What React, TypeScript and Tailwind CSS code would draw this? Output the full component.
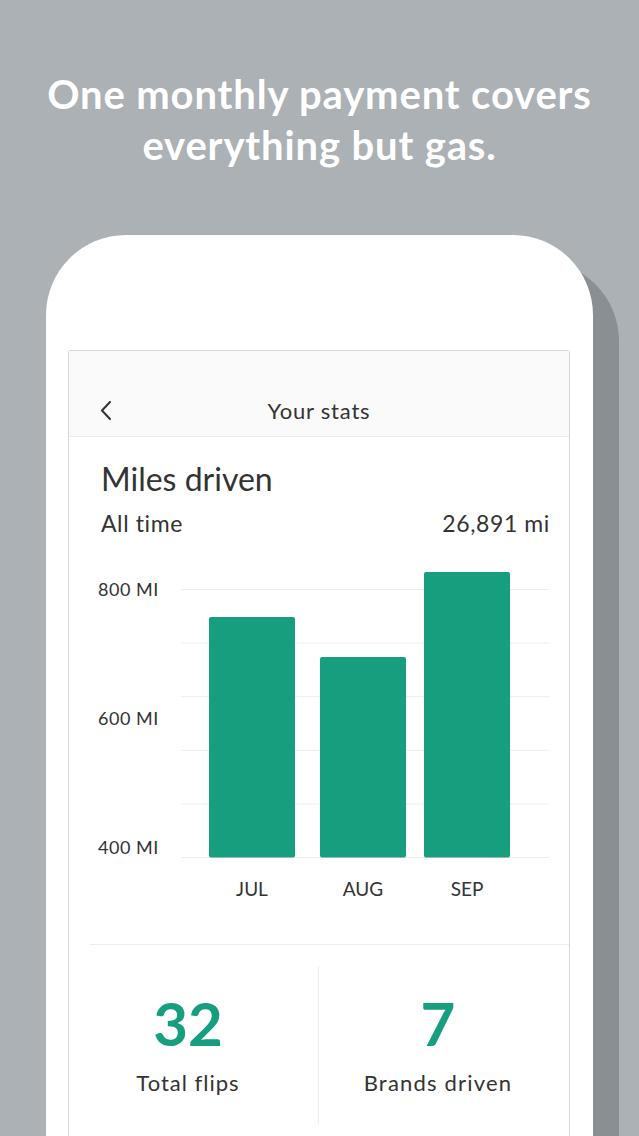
import React from 'react';

const GREEN = '#169e7f';

const bars = [
  { label: 'JUL', x: 28, top: 52, ml: 'ml-[28px]' },
  { label: 'AUG', x: 139, top: 92, ml: 'ml-[25px]' },
  { label: 'SEP', x: 243, top: 7, ml: 'ml-[18px]' },
];

const gridY = [24, 77.6, 131.2, 184.8, 238.4, 292];

function BackChevron() {
  return (
    <svg width="12" height="19" viewBox="0 0 12 19" fill="none">
      <polyline points="10,1 2,9.5 10,18" stroke="#333" strokeWidth="2" strokeLinecap="round" strokeLinejoin="round" />
    </svg>
  );
}

function MilesChart() {
  return (
    <div className="-ml-[3px] mt-[28px] flex h-[293px]">
      <div className="w-[83px] pt-[13px]">
        <div className="flex h-[280px] flex-col justify-between text-[18px] leading-[22px] tracking-[0.5px] text-[#333]">
          <span>800 MI</span>
          <span>600 MI</span>
          <span>400 MI</span>
        </div>
      </div>
      <svg width="368" height="293" viewBox="0 0 368 293">
        {gridY.map((y) => (
          <line key={y} x1="0" x2="368" y1={y + 0.5} y2={y + 0.5} stroke="#ededed" strokeWidth="1" />
        ))}
        {bars.map((b) => (
          <rect key={b.label} x={b.x} y={b.top} width="86" height={293 - b.top - 0.5} rx="2" fill={GREEN} />
        ))}
      </svg>
    </div>
  );
}

export default function App() {
  return (
    <div className="h-[1136px] w-[639px] overflow-hidden bg-[#abb1b4] font-['Lato','Noto_Sans',sans-serif]">
      <h1 className="pt-[69px] text-center text-[40px] font-bold leading-[51px] tracking-[0.85px] text-white">
        One monthly payment covers
        <br />
        everything but gas.
      </h1>

      <div className="ml-[46px] mt-[64px] h-[920px] w-[547px] rounded-t-[80px] bg-white pl-[22px] pt-[115px] shadow-[26px_26px_0_0_#8a8f93]">
        <div className="h-full w-[502px] rounded-t-[3px] border border-b-0 border-[#d6d6d6] text-[#333]">
          {/* nav bar */}
          <div className="relative flex h-[86px] items-end justify-center border-b border-[#ececec] bg-[#fafafa] pb-[11px]">
            <div className="absolute bottom-[16px] left-[31px]">
              <BackChevron />
            </div>
            <span className="text-[22px] leading-[28px] tracking-[0.8px]">Your stats</span>
          </div>

          <div className="pl-[32px] pr-[19px] pt-[23px]">
            <h2 className="text-[32px] leading-[38px]">Miles driven</h2>
            <div className="mt-[11px] flex justify-between text-[23px] leading-[28px] tracking-[0.6px]">
              <span>All time</span>
              <span>26,891 mi</span>
            </div>

            <MilesChart />

            <div className="ml-[80px] mt-[19px] flex text-[19px] leading-[23px]">
              {bars.map((b) => (
                <div key={b.label} className={`${b.ml} w-[86px] text-center`}>
                  {b.label}
                </div>
              ))}
            </div>
          </div>

          <div className="ml-[21px] mt-[44px] border-t border-[#ececec]" />

          <div className="flex">
            <div className="w-[249px] pr-[11px] pt-[42px] text-center">
              <div className="text-[60px] font-bold leading-[72px]" style={{ color: GREEN }}>32</div>
              <div className="mt-[11px] text-[22px] leading-[26px] tracking-[1px]">Total flips</div>
            </div>
            <div className="mt-[21px] h-[158px] flex-1 border-l border-[#ececec] pr-[12px] pt-[21px] text-center">
              <div className="text-[60px] font-bold leading-[72px]" style={{ color: GREEN }}>7</div>
              <div className="mt-[11px] text-[22px] leading-[26px] tracking-[1.2px]">Brands driven</div>
            </div>
          </div>
        </div>
      </div>
    </div>
  );
}
